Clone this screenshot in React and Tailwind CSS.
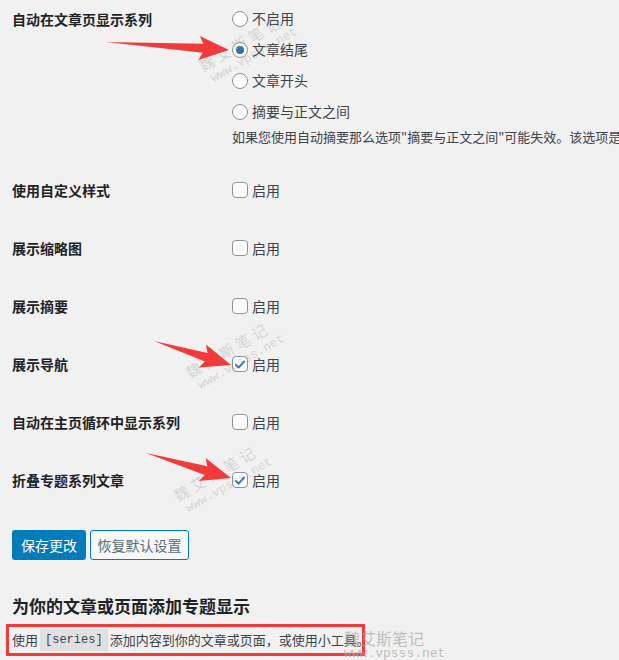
import React from "react";

const radios = ["不启用", "文章结尾", "文章开头", "摘要与正文之间"];

const checks = [
  { label: "使用自定义样式", on: false },
  { label: "展示缩略图", on: false },
  { label: "展示摘要", on: false },
  { label: "展示导航", on: true },
  { label: "自动在主页循环中显示系列", on: false },
  { label: "折叠专题系列文章", on: true },
];

const arrows = [
  [106, 42, 229, 50],
  [154, 341, 231, 365],
  [146, 453, 231, 478],
];

function arrowPoints([tx, ty, px, py]) {
  const dx = px - tx;
  const dy = py - ty;
  const len = Math.hypot(dx, dy);
  const ux = dx / len;
  const uy = dy / len;
  const nx = -uy;
  const ny = ux;
  const bx = px - ux * 26;
  const by = py - uy * 26;
  const pts = [
    [tx, ty],
    [bx + nx * 4.5, by + ny * 4.5],
    [bx - ux * 4 + nx * 12, by - uy * 4 + ny * 12],
    [px, py],
    [bx - ux * 4 - nx * 12, by - uy * 4 - ny * 12],
    [bx - nx * 4.5, by - ny * 4.5],
  ];
  return pts.map((p) => p.join(",")).join(" ");
}

const Radio = ({ checked }) => (
  <span className="w-4 h-4 rounded-full border border-[#8c8f94] bg-white flex items-center justify-center shrink-0">
    {checked && <span className="w-2 h-2 rounded-full bg-[#2271b1]" />}
  </span>
);

const Checkbox = ({ checked }) => (
  <span className="w-4 h-4 rounded-[4px] border border-[#8c8f94] bg-white flex items-center justify-center shrink-0">
    {checked && (
      <svg viewBox="0 0 20 20" className="w-[15px] h-[15px]">
        <path d="M4 10.5l4 4 8-9" fill="none" stroke="#2271b1" strokeWidth="2.6" strokeLinecap="round" strokeLinejoin="round" />
      </svg>
    )}
  </span>
);

const Watermark = ({ left, top }) => (
  <div
    className="absolute origin-top-left -rotate-[30deg] pointer-events-none text-[#9a9a9a]/35 leading-none"
    style={{ left, top }}
  >
    <div className="text-[15px] tracking-[4px]">魏艾斯笔记</div>
    <div className="text-[12.5px] mt-[4px] ml-[4px] font-['Liberation_Mono',monospace]">www.vpsss.net</div>
  </div>
);

export default function App() {
  return (
    <div className="relative h-[660px] overflow-hidden bg-[#f1f1f1] text-[#3c434a] font-['Noto_Sans_CJK_SC','Noto_Sans',sans-serif] text-[14px]">
      <div className="pl-3">
        {/* 显示位置 */}
        <div className="flex">
          <div className="w-[220px] shrink-0 pt-[9px] leading-5 font-semibold text-[#1d2327]">自动在文章页显示系列</div>
          <div className="pt-[3px]">
            {radios.map((r, i) => (
              <div key={r} className="h-[31px] flex items-center gap-1">
                <Radio checked={i === 1} />
                <span>{r}</span>
              </div>
            ))}
            <div className="mt-[1px] leading-[18px] text-[13px] whitespace-nowrap">
              如果您使用自动摘要那么选项"摘要与正文之间"可能失效。该选项是
            </div>
          </div>
        </div>

        <div className="mt-[15px]">
          {checks.map((c) => (
            <div key={c.label} className="h-[58px] flex items-center">
              <div className="w-[220px] shrink-0 font-semibold text-[#1d2327]">{c.label}</div>
              <div className="flex items-center gap-1">
                <Checkbox checked={c.on} />
                <span>启用</span>
              </div>
            </div>
          ))}
        </div>

        <div className="mt-[21px] flex gap-1">
          <button className="h-[30px] w-[74px] rounded-[3px] bg-[#007cba] text-white">保存更改</button>
          <button className="h-[30px] w-[99px] rounded-[3px] border border-[#007cba] bg-[#f6f7f7] text-[#5a6b78]">恢复默认设置</button>
        </div>

        <h2 className="mt-[34px] text-[17px] leading-6 font-bold text-[#1d2327]">为你的文章或页面添加专题显示</h2>
      </div>

      <div className="ml-[6px] mt-[6px] w-[359px] h-[32px] border-[3px] border-[#f23a3a] flex items-center pl-[3px] text-[13px] whitespace-nowrap">
        使用 <code className="mx-[2px] px-[5px] py-[2px] bg-black/[0.07] text-[12px] font-['Liberation_Mono',monospace]">[series]</code> 添加内容到你的文章或页面，或使用小工具。
      </div>

      <Watermark left={196} top={60} />
      <Watermark left={183} top={367} />
      <Watermark left={171} top={490} />

      <div className="absolute left-[344px] top-[630px] pointer-events-none leading-none text-[#a8a8a8]/70">
        <div className="text-[16px]">魏艾斯笔记</div>
        <div className="mt-[1px] text-[13px] font-['Liberation_Mono',monospace]">www.vpsss.net</div>
      </div>

      <svg className="absolute inset-0 pointer-events-none" width="619" height="660">
        {arrows.map((a, i) => (
          <polygon key={i} points={arrowPoints(a)} fill="#f23a3a" />
        ))}
      </svg>
    </div>
  );
}
